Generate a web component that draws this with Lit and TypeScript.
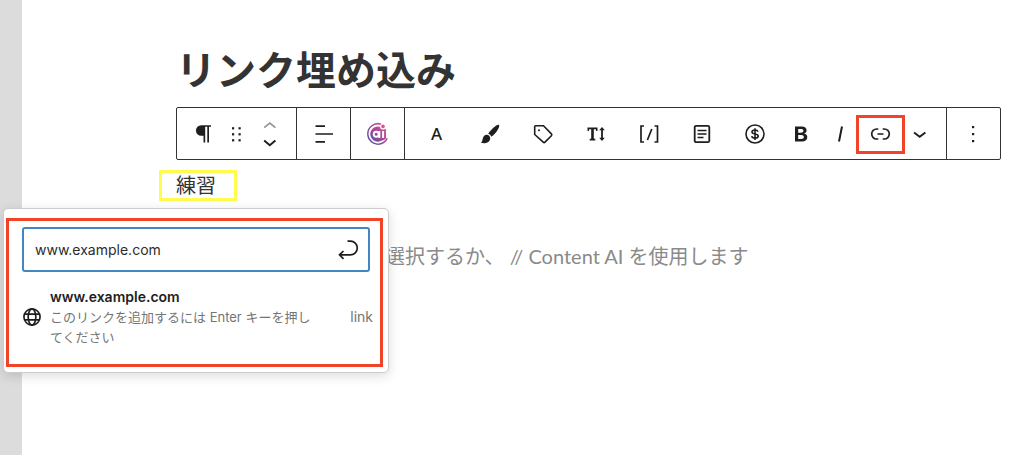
import { LitElement, html, css, svg } from "lit";
import { customElement, state } from "lit/decorators.js";

const line = (d: string, width = 1.5) =>
  svg`<path d=${d} fill="none" stroke="currentColor" stroke-width=${width}></path>`;

const icons = {
  paragraph: svg`<path d="M9.200 3.200H19V4.800h-2V20.500h-1.700V4.800h-2.100V20.500h-1.700v-6.800H9.200a5.250 5.250 0 0 1 0-10.500z" fill="currentColor"></path>`,
  grip: svg`<g fill="currentColor">${[5, 11, 17].map((y) =>
    [7, 13.5].map((x) => svg`<rect x=${x} y=${y + 0.2} width="2.2" height="2.2"></rect>`))}</g>`,
  up: line("M6.2 14.6l5.6-4.4 5.6 4.4", 1.7),
  down: line("M6.2 9.6l5.6 4.6 5.6-4.6", 2),
  align: line("M3.500 4.200h9.500M3.500 12h17.500M3.500 19.800h9.500", 1.7),
  brush: svg`<path d="M20.9 3.1c.8.8.1 2.5-1 4.3-1.7 2.800-4.300 6-6.700 7.300-.3-1.500-1.500-2.700-3-3 1.500-2.400 4.300-5.300 6.800-7.200 1.700-1.200 3.200-2.100 3.900-1.400zM9 12.800c1.600.1 3.100 1.600 3.200 3.200.2 3-2.600 5.100-5.300 5.200-1.500.1-3-.2-4.100-.7 1.300-.6 1.500-1.600 1.800-3.200.4-2.400 2-4.600 4.400-4.500z" fill="currentColor"></path>`,
  tag: svg`${line("M3.700 4.500v8l8.500 7.600c.5.500 1.300.5 1.800 0l6.400-6.400c.5-.5.5-1.300 0-1.800L12.500 3.700h-8c-.5 0-.8.300-.8.800z", 1.6)}<circle cx="8" cy="8.300" r="1" fill="currentColor"></circle>`,
  textSize: svg`<path d="M3.500 5.500h10v3.400h-1.300l-.4-1.700H9.800v9.400l1.500.4v1.500h-5.600V17l1.500-.4V7.200H5.200l-.4 1.700H3.500zM18 5l2.800 3.300h-1.900v7.400h1.900L18 19l-2.800-3.300h1.900V8.300h-1.900z" fill="currentColor"></path>`,
  shortcode: line("M7 4H4v16h3M17.500 4h3v16h-3M14.800 7l-4.400 11", 1.700),
  details: svg`<rect x="4.700" y="3.800" width="14.600" height="16.400" rx="1.500" fill="none" stroke="currentColor" stroke-width="1.800"></rect>${line("M7.500 8.400h9M7.500 12h9M7.500 15.600h6", 1.500)}`,
  dollar: svg`<circle cx="12" cy="12" r="9" fill="none" stroke="currentColor" stroke-width="1.600"></circle>${line("M15 9.700c-.4-1.100-1.500-1.700-3-1.700-1.700 0-3 .8-3 2 0 2.900 6.200 1.100 6.200 4 0 1.300-1.400 2.100-3.200 2.100-1.700 0-3-.8-3.300-2M12 6.200v11.700", 1.600)}`,
  bold: svg`<path d="M6 4.500h6.800c3 0 4.800 1.400 4.800 3.800 0 1.700-1 2.900-2.500 3.300 2 .3 3.200 1.700 3.200 3.700 0 2.600-2 4.200-5.200 4.200H6zm3.200 2.500v3.700h2.700c1.600 0 2.500-.7 2.500-1.900 0-1.200-.9-1.800-2.400-1.800zm0 6v4h3.100c1.700 0 2.600-.7 2.600-2s-1-2-2.700-2z" fill="currentColor"></path>`,
  italic: line("M13 4.500l-3 15", 2),
  link: line("M9.300 7H7.700a5 5 0 0 0 0 10h1.600M13.700 7h1.600a5 5 0 0 1 0 10h-1.600M8.500 12h6", 1.700),
  chevron: line("M5 10.500l5.700 4.300 5.700-4.300", 1.900),
  more: svg`<g fill="currentColor"><rect x="10" y="4" width="2.200" height="2.200"></rect><rect x="10" y="11" width="2.200" height="2.200"></rect><rect x="10" y="18" width="2.200" height="2.200"></rect></g>`,
  enter: line("M11.500 3.200h3a6.500 6.500 0 0 1 0 13.600H4M7.500 13l-4 3.800 4 4", 1.700),
  globe: svg`<g fill="none" stroke="currentColor" stroke-width="2"><circle cx="12" cy="12" r="9.700"></circle><ellipse cx="12" cy="12" rx="4.600" ry="9.700"></ellipse><path d="M3.500 8.500h17M3.500 15.500h17"></path></g>`,
};

const aiLogo = svg`
  <defs><linearGradient id="ai" gradientUnits="userSpaceOnUse" x1="2" y1="20" x2="20" y2="3">
    <stop offset="0" stop-color="#5057a5"></stop><stop offset=".5" stop-color="#a0489c"></stop><stop offset="1" stop-color="#ee4c87"></stop>
  </linearGradient></defs>
  <path d="M15.200 2.200A10.200 10.200 0 1 0 17.500 20.500Q20.300 19 21.200 16.200" fill="none" stroke="url(#ai)" stroke-width="1.500"></path>
  <path d="M14.300 4.900A7.600 7.600 0 1 0 16 18.500Q18.800 18.300 20 16.300V7H15.500z" fill="url(#ai)"></path>
  <g fill="none" stroke="#fff">
    <circle cx="10.200" cy="12.300" r="2.500" stroke-width="1.900"></circle>
    <path d="M13.300 8.900v7.200M17.100 8.900v7.200" stroke-width="2"></path>
  </g>
  <circle cx="17" cy="4.700" r="2.900" fill="#fff"></circle>
  <circle cx="17" cy="4.400" r="1.800" fill="#e64c8b"></circle>`;

const icon = (shape: unknown, cls = "icon") =>
  html`<svg class=${cls} viewBox="0 0 24 24" aria-hidden="true">${shape}</svg>`;

@customElement("link-popover")
export class LinkPopover extends LitElement {
  @state() private url = "www.example.com";

  static styles = css`
    :host {
      display: block;
      box-sizing: border-box;
      padding: 9px 5px 5px 2px;
      background: #fff;
      border: 1px solid #ccc;
      border-radius: 5px;
      box-shadow: 0 3px 12px rgb(0 0 0 / 14%);
      font-family: Inter, "Noto Sans CJK JP", sans-serif;
      color: #1e1e1e;
    }
    .marked {
      border: 3px solid #f04328;
      padding: 6px 7px 17px 13px;
    }
    .field {
      display: flex;
      align-items: center;
      height: 45px;
      box-sizing: border-box;
      margin-right: 3px;
      border: 2px solid #4386c1;
      border-radius: 3px;
      padding: 0 8px 0 11px;
    }
    input {
      flex: 1;
      min-width: 0;
      border: 0;
      padding: 0;
      outline: 0;
      background: none;
      font: 400 14px/20px Inter, sans-serif;
      color: #2c2c2c;
    }
    button {
      border: 0;
      padding: 0;
      background: none;
      font: inherit;
      color: inherit;
      text-align: left;
    }
    .submit,
    .enter { display: block; width: 24px; height: 24px; }
    .result {
      display: flex;
      align-items: center;
      width: 100%;
      margin-top: 15px;
    }
    .globe { flex: none; width: 20px; height: 20px; margin-right: 8px; }
    .info { flex: 1; }
    .url { display: block; font-size: 14px; line-height: 20px; font-weight: 600; }
    .hint, .kind { font-size: 13px; line-height: 20px; color: #757575; }
    .hint { display: block; }
    .kind { font-size: 14px; margin-left: 34px; }
  `;

  render() {
    return html`<div class="marked">
      <div class="field">
        <input type="text" aria-label="URL" .value=${this.url}
          @input=${(e: Event) => (this.url = (e.target as HTMLInputElement).value)} />
        <button class="submit" aria-label="送信">${icon(icons.enter, "enter")}</button>
      </div>
      <button class="result">
        ${icon(icons.globe, "globe")}
        <span class="info">
          <span class="url">${this.url}</span>
          <span class="hint">このリンクを追加するには Enter キーを押してください</span>
        </span>
        <span class="kind">link</span>
      </button>
    </div>`;
  }
}

@customElement("app-root")
export class AppRoot extends LitElement {
  static styles = css`
    :host {
      display: block;
      box-sizing: border-box;
      min-height: 100vh;
      border-left: 22px solid #dcdcdc;
      padding: 44px 23px 0 154px;
      background: #fff;
      color: #333;
      font-family: Lato, "Noto Sans CJK JP", sans-serif;
    }
    h1 {
      margin: 0;
      font-size: 40px;
      line-height: 52px;
      font-weight: 700;
    }
    .toolbar {
      display: flex;
      box-sizing: border-box;
      height: 53px;
      margin-top: 11px;
      border: 1px solid #333;
      border-radius: 2px;
      color: #1e1e1e;
    }
    .group {
      display: flex;
      align-items: center;
      justify-content: center;
      flex: none;
      width: 53px;
      border-right: 1px solid #333;
    }
    .group:last-child { border-right: 0; }
    .block { width: 119px; }
    .format { flex: 1; justify-content: flex-start; padding-left: 5px; }
    button {
      display: flex;
      align-items: center;
      justify-content: center;
      border: 0;
      padding: 0;
      background: none;
      color: inherit;
      width: 33px;
      height: 40px;
    }
    .wide { width: 53px; }
    .narrow { width: 40px; }
    .letter { font: 500 17px/24px "Noto Sans", sans-serif; }
    .movers { display: flex; flex-direction: column; }
    .movers button { height: 18px; }
    .dim { color: #949494; }
    .icon { flex: none; width: 24px; height: 24px; }
    .current { position: relative; }
    .current::after {
      content: "";
      position: absolute;
      inset: 1px -4px 0 -5px;
      border: 3px solid #f04328;
    }
    p { margin: 0; font-size: 20px; line-height: 30px; }
    .text { margin-top: 10px; }
    .selected { position: relative; display: inline-block; }
    .selected::after {
      content: "";
      position: absolute;
      inset: 0 -21px -1px -17px;
      border: 3px solid #fffb4f;
    }
    .prompt {
      margin-top: 41px;
      padding-left: 209px;
      color: #8a8a8a;
      font-weight: 400;
    }
    .anchor { position: relative; height: 0; }
    link-popover { position: absolute; top: 8px; left: -173px; width: 386px; }
  `;

  private button(label: string, shape: unknown, cls = "") {
    return html`<button class=${cls} aria-label=${label}>${icon(shape)}</button>`;
  }

  render() {
    return html`
      <h1>リンク埋め込み</h1>
      <div class="toolbar" role="toolbar">
        <div class="group block">
          ${this.button("段落", icons.paragraph)}
          ${this.button("ドラッグ", icons.grip)}
          <div class="movers">
            ${this.button("上に移動", icons.up, "dim")}
            ${this.button("下に移動", icons.down)}
          </div>
        </div>
        <div class="group">${this.button("配置", icons.align)}</div>
        <div class="group">${this.button("Content AI", aiLogo)}</div>
        <div class="group format">
          <button class="wide letter">A</button>
          ${this.button("ハイライト", icons.brush, "wide")}
          ${this.button("タグ", icons.tag, "wide")}
          ${this.button("文字サイズ", icons.textSize, "wide")}
          ${this.button("ショートコード", icons.shortcode, "wide")}
          ${this.button("詳細", icons.details, "wide")}
          ${this.button("価格", icons.dollar, "wide")}
          ${this.button("太字", icons.bold, "narrow")}
          ${this.button("イタリック", icons.italic, "narrow")}
          ${this.button("リンク", icons.link, "narrow current")}
          ${this.button("さらに表示", icons.chevron, "narrow")}
        </div>
        <div class="group">${this.button("オプション", icons.more)}</div>
      </div>
      <p class="text"><span class="selected">練習</span></p>
      <div class="anchor"><link-popover></link-popover></div>
      <p class="prompt">選択するか、 // Content AI を使用します</p>
    `;
  }
}
